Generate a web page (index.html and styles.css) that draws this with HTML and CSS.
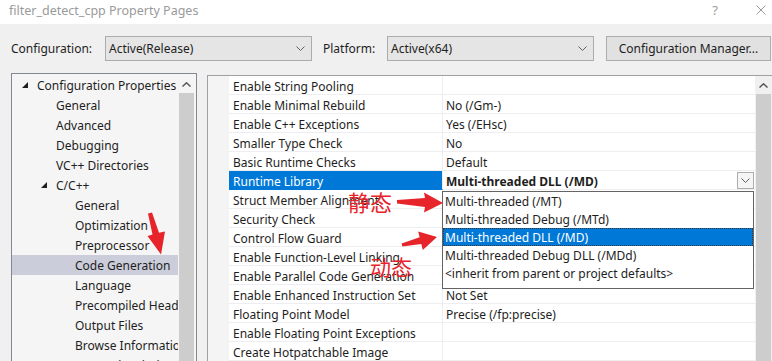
FILE: index.html
```html
<!DOCTYPE html>
<html lang="en">
<head>
  <meta charset="UTF-8">
  <title>filter_detect_cpp Property Pages</title>
  <link rel="stylesheet" href="styles.css">
</head>
<body>
  <div class="window">
    <div class="titlebar">
      <span class="title">filter_detect_cpp Property Pages</span>
      <span class="help">?</span>
      <svg class="close" width="10" height="10" viewBox="0 0 10 10"><path d="M0.5 0.5 L9.5 9.5 M9.5 0.5 L0.5 9.5" stroke="#9a9a9a" stroke-width="1" fill="none"/></svg>
    </div>

    <div class="toolbar">
      <span class="cfg-label">Configuration:</span>
      <div class="combo">
        <span>Active(Release)</span>
        <svg width="9" height="5" viewBox="0 0 9 5"><path d="M0.5 0.5 L4.5 4.5 L8.5 0.5" stroke="#606060" fill="none"/></svg>
      </div>
      <span class="cfg-label platform">Platform:</span>
      <div class="combo">
        <span>Active(x64)</span>
        <svg width="9" height="5" viewBox="0 0 9 5"><path d="M0.5 0.5 L4.5 4.5 L8.5 0.5" stroke="#606060" fill="none"/></svg>
      </div>
      <button class="manager">Configuration Manager...</button>
    </div>

    <div class="main">
      <!-- дерево слева -->
      <div class="tree">
        <ul class="tree-list">
          <li class="node lvl0"><span class="twisty"><svg width="6" height="6" viewBox="0 0 6 6"><polygon points="6,0 6,6 0,6" fill="#1e1e1e"/></svg></span>Configuration Properties</li>
          <li class="node lvl1">General</li>
          <li class="node lvl1">Advanced</li>
          <li class="node lvl1">Debugging</li>
          <li class="node lvl1">VC++ Directories</li>
          <li class="node lvl1 parent"><span class="twisty"><svg width="6" height="6" viewBox="0 0 6 6"><polygon points="6,0 6,6 0,6" fill="#1e1e1e"/></svg></span>C/C++</li>
          <li class="node lvl2">General</li>
          <li class="node lvl2">Optimization</li>
          <li class="node lvl2">Preprocessor</li>
          <li class="node lvl2 current">Code Generation</li>
          <li class="node lvl2">Language</li>
          <li class="node lvl2">Precompiled Headers</li>
          <li class="node lvl2">Output Files</li>
          <li class="node lvl2">Browse Information</li>
          <li class="node lvl2">External Includes</li>
        </ul>
        <div class="vscroll">
          <div class="vscroll-up"><svg width="9" height="5" viewBox="0 0 9 5"><path d="M0.5 4.5 L4.5 0.8 L8.5 4.5" stroke="#505050" stroke-width="1.4" fill="none"/></svg></div>
          <div class="vscroll-thumb"></div>
        </div>
      </div>

      <!-- таблица свойств -->
      <div class="props">
        <div class="grid">
          <div class="row"><div class="gutter"></div><div class="name">Enable String Pooling</div><div class="value"></div></div>
          <div class="row"><div class="gutter"></div><div class="name">Enable Minimal Rebuild</div><div class="value">No (/Gm-)</div></div>
          <div class="row"><div class="gutter"></div><div class="name">Enable C++ Exceptions</div><div class="value">Yes (/EHsc)</div></div>
          <div class="row"><div class="gutter"></div><div class="name">Smaller Type Check</div><div class="value">No</div></div>
          <div class="row"><div class="gutter"></div><div class="name">Basic Runtime Checks</div><div class="value">Default</div></div>
          <div class="row selected">
            <div class="gutter"></div>
            <div class="name">Runtime Library</div>
            <div class="value open">
              <b>Multi-threaded DLL (/MD)</b>
              <span class="drop-btn"><svg width="9" height="5" viewBox="0 0 9 5"><path d="M0.5 0.5 L4.5 4.5 L8.5 0.5" stroke="#606060" fill="none"/></svg></span>
              <ul class="dropdown">
                <li>Multi-threaded (/MT)</li>
                <li>Multi-threaded Debug (/MTd)</li>
                <li class="active">Multi-threaded DLL (/MD)</li>
                <li>Multi-threaded Debug DLL (/MDd)</li>
                <li>&lt;inherit from parent or project defaults&gt;</li>
              </ul>
            </div>
          </div>
          <div class="row"><div class="gutter"></div><div class="name">Struct Member Alignment</div><div class="value"></div></div>
          <div class="row"><div class="gutter"></div><div class="name">Security Check</div><div class="value"></div></div>
          <div class="row"><div class="gutter"></div><div class="name">Control Flow Guard</div><div class="value"></div></div>
          <div class="row"><div class="gutter"></div><div class="name">Enable Function-Level Linking</div><div class="value"></div></div>
          <div class="row"><div class="gutter"></div><div class="name">Enable Parallel Code Generation</div><div class="value"></div></div>
          <div class="row"><div class="gutter"></div><div class="name">Enable Enhanced Instruction Set</div><div class="value">Not Set</div></div>
          <div class="row"><div class="gutter"></div><div class="name">Floating Point Model</div><div class="value">Precise (/fp:precise)</div></div>
          <div class="row"><div class="gutter"></div><div class="name">Enable Floating Point Exceptions</div><div class="value"></div></div>
          <div class="row"><div class="gutter"></div><div class="name">Create Hotpatchable Image</div><div class="value"></div></div>
        </div>
        <div class="vscroll right">
          <div class="vscroll-up"><svg width="9" height="5" viewBox="0 0 9 5"><path d="M0.5 4.5 L4.5 0.8 L8.5 4.5" stroke="#505050" stroke-width="1.4" fill="none"/></svg></div>
          <div class="vscroll-thumb"></div>
        </div>
      </div>
    </div>

    <!-- пометки поверх скриншота -->
    <span class="note static">静态</span>
    <span class="note dynamic">动态</span>
    <svg class="arrows" width="772" height="361" viewBox="0 0 772 361">
      <polygon fill="#e8242b" points="397,200 425,198 424,192.5 443,203 424,212.5 425,207 397,203.5"/>
      <polygon fill="#e8242b" points="402.4,246.5 421.3,244 422.8,250 437,237 418.2,231.5 419.6,237.3 401.6,243.5"/>
      <polygon fill="#e8242b" points="148,213.5 152.5,234.6 147.5,236 161,254.5 165,231.4 159,232.8 152,212.5"/>
    </svg>
  </div>
</body>
</html>
```

FILE: styles.css
```css
body {
  margin: 0;
  background: #f0f0f0;
  font-family: "Noto Sans", "Liberation Sans", sans-serif;
  font-size: 12px;
  color: #1e1e1e;
  overflow: hidden;
}
ul {
  list-style: none;
  margin: 0;
  padding: 0;
}
.window {
  position: relative;
  width: 772px;
  height: 361px;
  overflow: hidden;
}

/* заголовок окна */
.titlebar {
  height: 24px;
  background: #fff;
  display: flex;
  align-items: center;
  padding: 0 0 4px 9px;
  box-sizing: border-box;
}
.title {
  font-size: 12.5px;
  color: #9a9a9a;
  flex: 1;
}
.help {
  font-size: 13px;
  color: #9a9a9a;
  margin-right: 38px;
}
.close {
  margin-right: 6px;
}

/* строка конфигурации */
.toolbar {
  height: 49px;
  display: flex;
  align-items: center;
  padding-left: 11px;
}
.cfg-label {
  width: 94px;
}
.cfg-label.platform {
  width: 64px;
  margin-left: 11px;
}
.combo {
  width: 207px;
  height: 25px;
  box-sizing: border-box;
  border: 1px solid #acacac;
  background: #e5e5e5;
  display: flex;
  align-items: center;
  justify-content: space-between;
  padding: 0 6px 0 3px;
}
.manager {
  margin-left: 12px;
  width: 165px;
  height: 25px;
  border: 1px solid #adadad;
  background: #e1e1e1;
  font: inherit;
  color: #1e1e1e;
  padding: 0;
}

.main {
  display: flex;
  align-items: flex-start;
  padding-left: 11px;
}

/* дерево */
.tree {
  width: 186px;
  height: 300px;
  box-sizing: border-box;
  border: 1px solid #828790;
  background: #f5f5f5;
  display: flex;
  padding: 1px 2px 0 0;
}
.tree-list {
  width: 166px;
  overflow: hidden;
}
.node {
  height: 20px;
  line-height: 21px;
  white-space: nowrap;
  display: flex;
  align-items: center;
}
.twisty {
  width: 15px;
  display: inline-flex;
  align-items: center;
}
.lvl0 { padding-left: 10px; }
.lvl1 { padding-left: 44px; }
.lvl1.parent { padding-left: 29px; }
.lvl2 { padding-left: 63px; }
.node.current {
  background: #cbcdda;
}

.vscroll {
  width: 15px;
  margin-left: 1px;
  display: flex;
  flex-direction: column;
}
.vscroll-up {
  height: 18px;
  display: flex;
  align-items: center;
  justify-content: center;
}
.vscroll-thumb {
  flex: 1;
  background: #cdcdcd;
}

/* таблица свойств */
.props {
  margin-left: 10px;
  margin-top: 2px;
  width: 565px;
  height: 300px;
  box-sizing: border-box;
  border-left: 1px solid #a0a0a0;
  border-top: 1px solid #a0a0a0;
  display: flex;
}
.grid {
  width: 547px;
  background: #fff;
}
.row {
  display: flex;
  height: 19px;
}
.gutter {
  width: 21px;
  background: #f4f4f4;
}
.name {
  width: 214px;
  box-sizing: border-box;
  border-right: 1px solid #eeeef2;
  border-bottom: 1px solid #eeeef2;
  padding-left: 4px;
  line-height: 21px;
  white-space: nowrap;
  overflow: hidden;
}
.value {
  flex: 1;
  border-bottom: 1px solid #eeeef2;
  padding-left: 3px;
  line-height: 21px;
  white-space: nowrap;
}
.row.selected .name {
  background: #0078d7;
  color: #fff;
  border-bottom-color: #0078d7;
}
.value.open {
  position: relative;
  display: flex;
  justify-content: space-between;
}
.drop-btn {
  width: 17px;
  height: 17px;
  box-sizing: border-box;
  margin: 1px 1px 0 0;
  border: 1px solid #adadad;
  background: #f5f5f5;
  display: flex;
  align-items: center;
  justify-content: center;
}
.dropdown {
  position: absolute;
  left: -1px;
  top: 20px;
  width: 312px;
  height: 98px;
  box-sizing: border-box;
  border: 1px solid #646464;
  background: #fff;
  z-index: 2;
}
.dropdown li {
  height: 18px;
  line-height: 20px;
  padding-left: 2px;
  font-weight: normal;
}
.dropdown li.active {
  background: #0078d7;
  color: #fff;
  outline: 1px dotted #3a3a3a;
  outline-offset: -1px;
}
.vscroll.right {
  margin-left: 1px;
}

/* красные пометки */
.note {
  position: absolute;
  font-family: "Noto Sans CJK SC", sans-serif;
  color: #e8242b;
  line-height: 1;
  z-index: 3;
}
.note.static {
  left: 348px;
  top: 190px;
  font-size: 22px;
}
.note.dynamic {
  left: 370px;
  top: 256px;
  font-size: 21px;
}
.arrows {
  position: absolute;
  left: 0;
  top: 0;
  z-index: 3;
  pointer-events: none;
}
```
